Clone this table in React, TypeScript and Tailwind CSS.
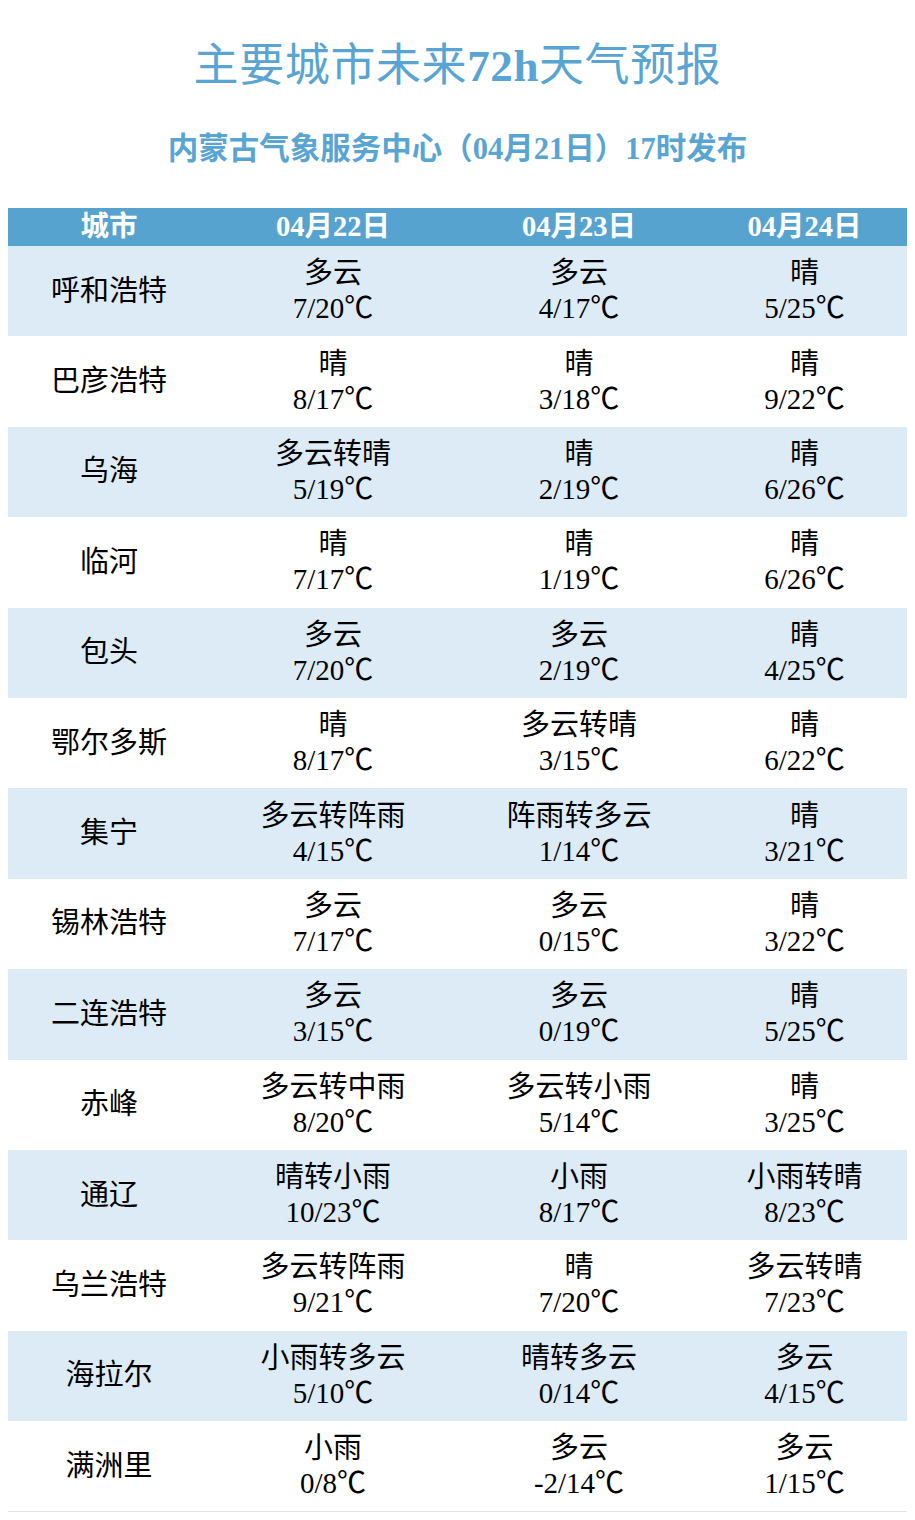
import React from 'react';

interface Row {
  city: string;
  days: [string, string][];
}

const rows: Row[] = [
  { city: '呼和浩特', days: [['多云', '7/20℃'], ['多云', '4/17℃'], ['晴', '5/25℃']] },
  { city: '巴彦浩特', days: [['晴', '8/17℃'], ['晴', '3/18℃'], ['晴', '9/22℃']] },
  { city: '乌海', days: [['多云转晴', '5/19℃'], ['晴', '2/19℃'], ['晴', '6/26℃']] },
  { city: '临河', days: [['晴', '7/17℃'], ['晴', '1/19℃'], ['晴', '6/26℃']] },
  { city: '包头', days: [['多云', '7/20℃'], ['多云', '2/19℃'], ['晴', '4/25℃']] },
  { city: '鄂尔多斯', days: [['晴', '8/17℃'], ['多云转晴', '3/15℃'], ['晴', '6/22℃']] },
  { city: '集宁', days: [['多云转阵雨', '4/15℃'], ['阵雨转多云', '1/14℃'], ['晴', '3/21℃']] },
  { city: '锡林浩特', days: [['多云', '7/17℃'], ['多云', '0/15℃'], ['晴', '3/22℃']] },
  { city: '二连浩特', days: [['多云', '3/15℃'], ['多云', '0/19℃'], ['晴', '5/25℃']] },
  { city: '赤峰', days: [['多云转中雨', '8/20℃'], ['多云转小雨', '5/14℃'], ['晴', '3/25℃']] },
  { city: '通辽', days: [['晴转小雨', '10/23℃'], ['小雨', '8/17℃'], ['小雨转晴', '8/23℃']] },
  { city: '乌兰浩特', days: [['多云转阵雨', '9/21℃'], ['晴', '7/20℃'], ['多云转晴', '7/23℃']] },
  { city: '海拉尔', days: [['小雨转多云', '5/10℃'], ['晴转多云', '0/14℃'], ['多云', '4/15℃']] },
  { city: '满洲里', days: [['小雨', '0/8℃'], ['多云', '-2/14℃'], ['多云', '1/15℃']] },
];

const colW = ['w-[202px]', 'w-[246px]', 'w-[246px]', 'w-[205px]'];

export default function App() {
  return (
    <div className="w-[915px] h-[1520px] bg-white font-['Liberation_Serif','Noto_Sans_CJK_SC',serif] text-black">
      {/* Heading */}
      <div className="pt-[40px] flex flex-col items-center text-[#58a5d3]">
        <h1 className="text-[45px] leading-[52px] tracking-[0.6px]">
          主要城市未来<span className="font-bold">72h</span>天气预报
        </h1>
        <p className="mt-[39px] text-[30.5px] leading-[36px] font-bold">
          内蒙古气象服务中心（04月21日）17时发布
        </p>
      </div>

      {/* Table */}
      <div className="mt-[41px] mx-[8px] w-[899px] border-b border-[#e4e4e4]">
        <div className="flex h-[38px] bg-[#57a3d0] text-white font-bold text-[28.5px] leading-[38px]">
          {['城市', '04月22日', '04月23日', '04月24日'].map((h, i) => (
            <div key={h} className={`${colW[i]} text-center`}>
              {h}
            </div>
          ))}
        </div>
        {rows.map((r, idx) => (
          <div
            key={r.city}
            className={`flex h-[90.4px] items-center text-[29px] leading-[35px] ${idx % 2 === 0 ? 'bg-[#ddebf7]' : 'bg-white'}`}
          >
            <div className={`${colW[0]} text-center`}>{r.city}</div>
            {r.days.map((d, i) => (
              <div key={i} className={`${colW[i + 1]} flex flex-col items-center`}>
                <span>{d[0]}</span>
                <span>{d[1]}</span>
              </div>
            ))}
          </div>
        ))}
      </div>
    </div>
  );
}
